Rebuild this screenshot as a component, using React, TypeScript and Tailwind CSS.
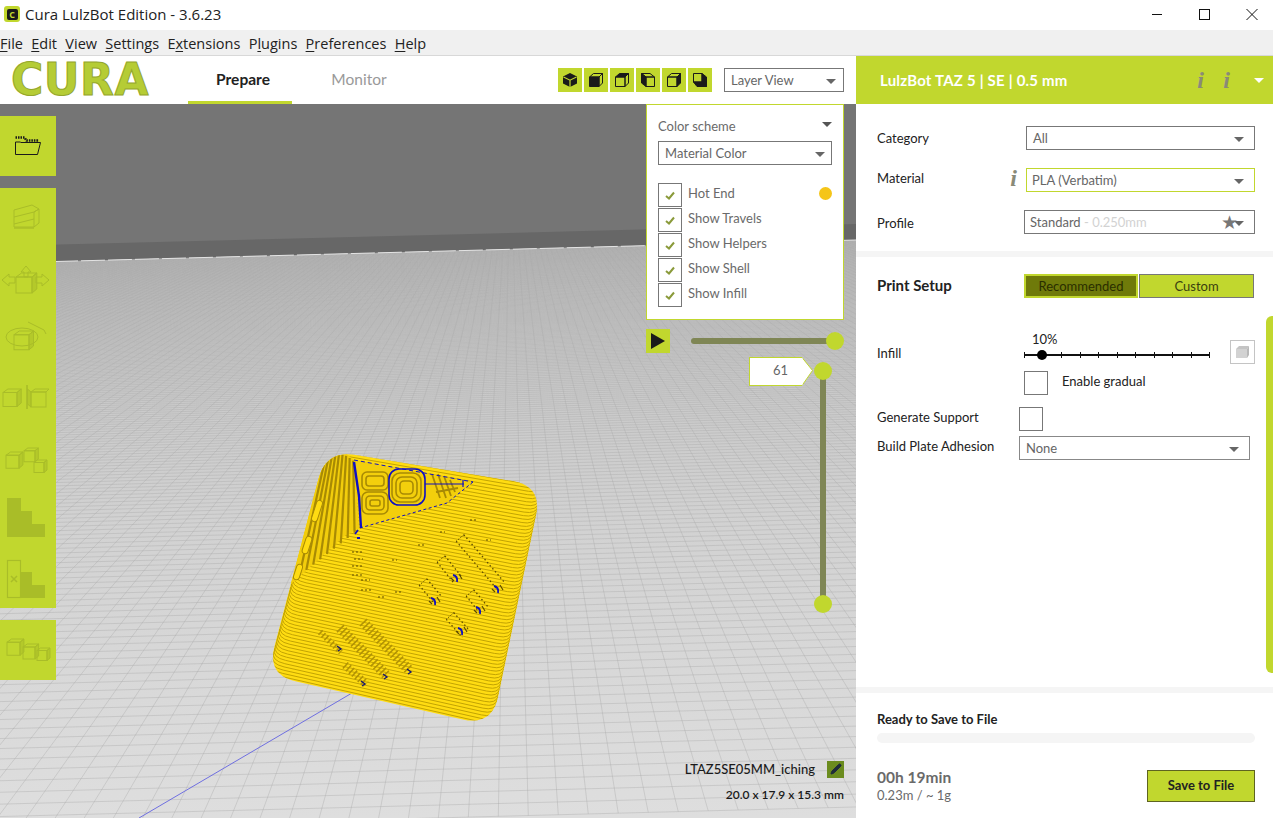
import { Pencil } from "lucide-react";

type Pt = [number, number];

const green = "bg-[#c1d72e]";

function roundedQuad(c: Pt[], r: number) {
  let d = "";
  c.forEach((p, i) => {
    const prev = c[(i + c.length - 1) % c.length];
    const next = c[(i + 1) % c.length];
    const la = Math.hypot(prev[0] - p[0], prev[1] - p[1]);
    const lb = Math.hypot(next[0] - p[0], next[1] - p[1]);
    const ra = Math.min(r, la / 2) / la;
    const rb = Math.min(r, lb / 2) / lb;
    const a = [p[0] + (prev[0] - p[0]) * ra, p[1] + (prev[1] - p[1]) * ra];
    const b = [p[0] + (next[0] - p[0]) * rb, p[1] + (next[1] - p[1]) * rb];
    d += `${i === 0 ? "M" : "L"}${a[0].toFixed(1)} ${a[1].toFixed(1)}Q${p[0]} ${p[1]} ${b[0].toFixed(1)} ${b[1].toFixed(1)}`;
  });
  return d + "Z";
}

const outer: Pt[] = [[326, 450], [542, 486], [492, 726], [267, 675]];

// printed layers: nearly parallel lines that hook up along both side walls
function layerLines() {
  let d = "";
  const n = 74;
  for (let i = 0; i <= n; i++) {
    const y0 = 455 + 3.5 * i;
    const s = 0.17 + 0.06 * (i / n);
    const at = (x: number) => y0 + s * (x - 400);
    let lx = 300;
    let rx = 520;
    for (let k = 0; k < 3; k++) {
      lx = 326 - 0.262 * (at(lx) - 450);
      rx = 542 - 0.21 * (at(rx) - 486);
    }
    const ly = at(lx);
    const ry = at(rx);
    d += `M${(lx + 3).toFixed(1)} ${(ly - 9).toFixed(1)}Q${lx.toFixed(1)} ${ly.toFixed(1)} ${(lx + 14).toFixed(1)} ${at(lx + 14).toFixed(1)}`;
    d += `L${(rx - 12).toFixed(1)} ${at(rx - 12).toFixed(1)}Q${rx.toFixed(1)} ${ry.toFixed(1)} ${(rx + 2).toFixed(1)} ${(ry - 8).toFixed(1)}`;
  }
  return d;
}

function floorGrid() {
  let d = "";
  const h = 130;
  const vx = 520;
  for (let i = 0; i < 280; i++) {
    const y = h + 688 / (1 + 0.019 * i);
    d += `M-60 ${y.toFixed(1)}H920`;
  }
  for (let i = -190; i < 190; i++) {
    const x0 = vx + i * 30;
    d += `M${vx + i * 30 * 0.14} ${h + 688 * 0.14}L${x0} 818`;
  }
  return d;
}

function fanStripes() {
  const lines = [];
  const n = 9;
  for (let i = 0; i < n; i++) {
    const t = (i + 0.5) / n;
    const x1 = 323 + (355 - 323) * t;
    const y1 = 462 - 8 * Math.sin(t * Math.PI);
    const x2 = 296 + (358 - 296) * t;
    const y2 = 578 + (530 - 578) * t;
    lines.push(<line key={i} x1={x1} y1={y1} x2={x2} y2={y2} stroke="#a88a04" strokeWidth={2.2} />);
  }
  return lines;
}

function Slot({ a, b, tip }: { a: Pt; b: Pt; tip: Pt }) {
  const len = Math.hypot(b[0] - a[0], b[1] - a[1]);
  const nx = ((b[1] - a[1]) / len) * 5;
  const ny = (-(b[0] - a[0]) / len) * 5;
  return (
    <g fill="none">
      <line x1={a[0] + nx} y1={a[1] + ny} x2={b[0] + nx} y2={b[1] + ny} stroke="#5d4b00" strokeWidth={1.3} strokeDasharray="1.5 2.5" />
      <line x1={a[0] - nx} y1={a[1] - ny} x2={b[0] - nx} y2={b[1] - ny} stroke="#5d4b00" strokeWidth={1.3} strokeDasharray="1.5 2.5" />
      <path d={`M${a[0] + nx} ${a[1] + ny}L${a[0] - nx} ${a[1] - ny}`} stroke="#5d4b00" strokeDasharray="1.5 1.5" />
      <path d={`M${tip[0] - 4} ${tip[1] - 5}q5 1 4 7`} stroke="#1010c0" strokeWidth={1.8} />
      <path d={`M${tip[0] + 2} ${tip[1] - 6}l3 5M${tip[0] - 6} ${tip[1] - 2}l3 3`} stroke="#5d4b00" strokeWidth={1.2} />
    </g>
  );
}

function Ribbon({ a, b, w, tip }: { a: Pt; b: Pt; w: number; tip: Pt }) {
  return (
    <g>
      <line x1={a[0]} y1={a[1]} x2={b[0]} y2={b[1]} stroke="#b29304" strokeWidth={w} strokeDasharray="1.6 2.4" />
      <path d={`M${tip[0] - 3} ${tip[1] - 3}l4 3l-3 2`} fill="none" stroke="#1a1a70" strokeWidth={1.4} />
    </g>
  );
}

// the 3D view: build plate, back wall and the sliced model
function Scene() {
  return (
    <svg className="absolute inset-0" width={856} height={714} viewBox="0 104 856 714">
      <defs>
        <linearGradient id="floor" x1="0" y1="240" x2="0" y2="818" gradientUnits="userSpaceOnUse">
          <stop offset="0" stopColor="#c0c0c0" />
          <stop offset="0.5" stopColor="#d2d2d2" />
          <stop offset="1" stopColor="#dedede" />
        </linearGradient>
        <clipPath id="floorClip">
          <polygon points="0,263 856,240 856,818 0,818" />
        </clipPath>
        <clipPath id="dieClip">
          <path d={roundedQuad(outer, 30)} />
        </clipPath>
      </defs>
      <rect x={0} y={104} width={856} height={714} fill="#757575" />
      <polygon points="0,246 856,224 856,242 0,264" fill="#676767" />
      <polygon points="0,263 856,240 856,818 0,818" fill="url(#floor)" />
      <g clipPath="url(#floorClip)">
        <path d={floorGrid()} transform="rotate(-1.5 430 500)" fill="none" stroke="#a8a8a8" strokeWidth={0.7} strokeOpacity={0.55} />
      </g>
      <line x1={0} y1={263} x2={856} y2={240} stroke="#e4e4e4" strokeWidth={1} strokeDasharray="24 3" />
      <line x1={139} y1={818} x2={352} y2={693} stroke="#6f6fe0" strokeWidth={1} />

      <path d={roundedQuad(outer, 30)} fill="#ffdc12" />
      <g clipPath="url(#dieClip)">
        <path d={layerLines()} fill="none" stroke="#c2a303" strokeWidth={1} />
        {/* left wall with coarse stripes */}
        <polygon points="318,462 342,450 355,461 359,528 343,537 290,585" fill="#f2cd0c" />
        {fanStripes()}
        <rect x={-3} y={-11} width={6} height={22} rx={3} transform="translate(317 511) rotate(18)" fill="#ffdc12" stroke="#a88a04" />
        <rect x={-3} y={-9} width={6} height={18} rx={3} transform="translate(307 545) rotate(18)" fill="#ffdc12" stroke="#a88a04" />
        <rect x={-3} y={-8} width={6} height={16} rx={3} transform="translate(298 572) rotate(18)" fill="#ffdc12" stroke="#a88a04" />
        {/* top recess */}
        <polygon points="354,460 473,482 447,503 360,528" fill="#f3cf0c" />
      </g>
      <g fill="none" stroke="#a88a04" strokeWidth={1.6}>
        <rect x={362} y={472} width={26} height={18} rx={5} />
        <rect x={366} y={476} width={18} height={10} rx={3} />
        <rect x={362} y={492} width={26} height={22} rx={6} />
        <rect x={366} y={496} width={18} height={14} rx={4} />
        <rect x={370} y={500} width={10} height={6} rx={2} />
        <rect x={392} y={473} width={29} height={29} rx={8} />
        <rect x={396} y={477} width={21} height={21} rx={6} />
        <rect x={400} y={481} width={13} height={13} rx={4} />
        <path d="M432 474l8 24M438 474l8 24M444 476l7 20M450 480l5 12M436 492l22-4" strokeWidth={1.8} />
      </g>
      <g fill="none" stroke="#0f0fc4">
        <path d="M354 462l5 34l2 32" strokeWidth={2.4} />
        <path d="M354 460L473 482" strokeWidth={1} strokeDasharray="4 3" />
        <path d="M473 482L447 503L360 528" strokeWidth={1} strokeDasharray="3 2.5" />
        <rect x={389} y={469} width={36} height={36} rx={10} strokeWidth={1.6} />
        <path d="M425 484H464M463 480v7" strokeWidth={1.2} />
        <path d="M358 530l-3 4M360 538h-3" strokeWidth={1.8} />
      </g>
      <path d="M352 552h10M354 559h9M352 566h11M352 575h12M361 580h9M361 590h10M378 597h6M395 592h6M392 560h5M418 545h6M440 532h5M470 520h6M486 540h5" stroke="#5d4b00" strokeWidth={1} strokeDasharray="2 2" />

      <Slot a={[460, 538]} b={[501, 586]} tip={[498, 591]} />
      <Slot a={[441, 559]} b={[457, 579]} tip={[457, 580]} />
      <Slot a={[423, 582]} b={[438, 600]} tip={[435, 603]} />
      <Slot a={[470, 593]} b={[484, 610]} tip={[480, 612]} />
      <Slot a={[450, 616]} b={[466, 634]} tip={[462, 633]} />
      <Ribbon a={[320, 632]} b={[341, 652]} w={6} tip={[340, 649]} />
      <Ribbon a={[340, 628]} b={[387, 676]} w={10} tip={[386, 677]} />
      <Ribbon a={[363, 622]} b={[410, 671]} w={10} tip={[410, 672]} />
      <Ribbon a={[345, 665]} b={[366, 684]} w={8} tip={[364, 684]} />
    </svg>
  );
}

function Caret({ className = "" }: { className?: string }) {
  return (
    <svg width="10" height="5" viewBox="0 0 10 5" className={className}>
      <polygon points="0,0 10,0 5,5" fill="currentColor" />
    </svg>
  );
}

function Cube({ top, front, side }: { top?: boolean; front?: boolean; side?: boolean }) {
  return (
    <svg width="16" height="16" viewBox="0 0 16 16" stroke="#1a1a1a" strokeWidth="1" strokeLinejoin="round">
      <polygon points="1.500,5 5.500,1.500 14.500,1.500 11,5" fill={top ? "#1a1a1a" : "none"} />
      <polygon points="1.500,5 11,5 11,14.500 1.500,14.500" fill={front ? "#1a1a1a" : "none"} />
      <polygon points="11,5 14.500,1.500 14.500,11 11,14.500" fill={side ? "#1a1a1a" : "none"} />
    </svg>
  );
}

function LeftCube() {
  return (
    <svg width="16" height="16" viewBox="0 0 16 16" stroke="#1a1a1a" strokeLinejoin="round">
      <polygon points="1.500,1.500 10,1.500 14.500,5 6,5" fill="none" />
      <polygon points="1.500,1.500 6,5 6,14.500 1.500,11" fill="#1a1a1a" />
      <rect x="6" y="5" width="8.500" height="9.500" fill="none" />
    </svg>
  );
}

function IsoCube() {
  return (
    <svg width="16" height="16" viewBox="0 0 16 16">
      <polygon points="8,1 15,4.500 15,11.500 8,15 1,11.500 1,4.500" fill="#1a1a1a" />
      <path d="M1.500 5L8 8.200L14.500 5M8 8.200V15" stroke="#c1d72e" strokeWidth="1.200" fill="none" />
    </svg>
  );
}

function BackCube() {
  return (
    <svg width="16" height="16" viewBox="0 0 16 16" stroke="#1a1a1a" strokeLinejoin="round">
      <polygon points="1.500,1.500 10,1.500 10,10 1.500,10" fill="none" />
      <polygon points="1.500,10 10,10 14.500,14.500 5,14.500" fill="#1a1a1a" />
      <polygon points="10,1.500 14.500,5 14.500,14.500 10,10" fill="#1a1a1a" />
    </svg>
  );
}

function Select({ value, extra, className, border = "border-[#777]" }: { value: string; extra?: string; className: string; border?: string }) {
  return (
    <div className={`h-6 flex items-center justify-between pt-[2px] border bg-white text-[13px] text-[#666] ${border} ${className}`}>
      <span>
        {value}
        {extra && <span className="text-[#d2d2d2]">{extra}</span>}
      </span>
      <Caret className="text-[#666]" />
    </div>
  );
}

function Check({ label, dot }: { label: string; dot?: boolean }) {
  return (
    <div className="flex items-center h-6">
      <div className="w-6 h-6 border border-[#777] flex items-center justify-center shrink-0">
        <svg width="10" height="9" viewBox="0 0 10 9">
          <path d="M1 5l3 2.500L9 1.500" fill="none" stroke="#8a9a3a" strokeWidth="2" />
        </svg>
      </div>
      <span className="ml-[6px] -mt-[2px] text-[13px] text-[#6a6a6a] flex-1">{label}</span>
      {dot && <span className="-mt-[4px] w-[13px] h-[13px] rounded-full bg-[#f5c518]" />}
    </div>
  );
}

function InfoI({ className = "" }: { className?: string }) {
  return <span className={`font-['Liberation_Serif',serif] italic font-bold text-[24px] leading-none text-[#8a8a78] ${className}`}>i</span>;
}

const toolStroke = "#a9bd28";

function ToolIcon({ children }: { children: React.ReactNode }) {
  return (
    <svg width="56" height="60" viewBox="0 0 56 60" fill="none" stroke={toolStroke} strokeWidth="1">
      {children}
    </svg>
  );
}

function MiniCube({ x, y, s = 14 }: { x: number; y: number; s?: number }) {
  return (
    <g>
      <polygon points={`${x},${y + s * 0.25} ${x + s * 0.35},${y} ${x + s * 1.3},${y} ${x + s},${y + s * 0.25}`} />
      <rect x={x} y={y + s * 0.25} width={s} height={s} />
      <polygon points={`${x + s},${y + s * 0.25} ${x + s * 1.3},${y} ${x + s * 1.3},${y + s} ${x + s},${y + s * 1.25}`} fill={toolStroke} fillOpacity="0.55" />
    </g>
  );
}

function LeftToolbar() {
  return (
    <div className="absolute left-0 top-3 w-14 flex flex-col gap-3">
      <div className={`${green} h-[60px] flex items-center justify-center`}>
        <svg width="28" height="20" viewBox="0 0 28 20" fill="none" stroke="#1a1a1a" strokeWidth="1">
          <path d="M1.500 1.500h9l2 3h12l-1 0" strokeWidth="2.400" strokeDasharray="1.500 1" />
          <path d="M1.500 6v12.500h22L26.500 6.500H6.500M1.500 6h5" />
        </svg>
      </div>
      <div className={`${green} h-[420px] flex flex-col`}>
        <ToolIcon>
          <path d="M14 22l18-5l7 4l-5 3v15H14zM14 29l20-5M14 36l20-5M34 24l5-3v14l-5 4" />
          <path d="M14 40h20" strokeWidth="2" strokeOpacity="0.7" />
        </ToolIcon>
        <ToolIcon>
          <MiniCube x={16} y={25} s={16} />
          <path d="M26 18l-5 6h3v5h4v-5h3zM2 32l7-6v3h6v6H9v3zM49 32l-7-6v3h-6v6h6v3z" />
        </ToolIcon>
        <ToolIcon>
          <ellipse cx="22" cy="29" rx="16" ry="9" />
          <MiniCube x={14} y={23} s={15} />
          <path d="M28 14l16 8l2 4" />
        </ToolIcon>
        <ToolIcon>
          <MiniCube x={3} y={21} s={14} />
          <path d="M27 17v24" strokeWidth="1.600" />
          <rect x={31} y={24} width={15} height={15} />
          <polygon points="31,24 35,21 49,21 46,24" />
          <polygon points="31,24 27.500,21 27.500,36 31,39" fill={toolStroke} fillOpacity="0.55" />
        </ToolIcon>
        <ToolIcon>
          <MiniCube x={6} y={24} s={13} />
          <MiniCube x={24} y={20} s={11} />
          <MiniCube x={34} y={32} s={10} />
        </ToolIcon>
        <ToolIcon>
          <polygon points="7,10 21,10 21,23 32,23 32,36 45,36 45,49 7,49" fill={toolStroke} stroke="none" />
        </ToolIcon>
        <ToolIcon>
          <rect x={7.500} y={12.500} width={13} height={37} strokeWidth="1.200" />
          <path d="M11 28l6 6M17 28l-6 6" strokeWidth="1.500" />
          <polygon points="21,24 32,24 32,37 45,37 45,50 21,50" fill={toolStroke} stroke="none" />
        </ToolIcon>
      </div>
      <div className={`${green} h-[60px] flex items-center justify-center`}>
        <svg width="50" height="30" viewBox="0 0 50 30" fill="none" stroke={toolStroke}>
          <MiniCube x={4} y={4} s={13} />
          <MiniCube x={20} y={9} s={12} />
          <MiniCube x={34} y={13} s={10} />
        </svg>
      </div>
    </div>
  );
}

function LayerPanel() {
  return (
    <div className="absolute right-3 top-0 w-[198px] font-['Lato',sans-serif]">
      <div className="h-[216px] bg-white border border-[#c1d72e] px-[11px] pt-[11px]">
        <div className="flex items-center justify-between h-5 text-[13px] text-[#6a6a6a]">
          <span className="pt-[2px]">Color scheme</span>
          <Caret className="text-[#555] -mt-1" />
        </div>
        <Select value="Material Color" className="mt-[5px] w-full pl-[6px] pr-[6px]" />
        <div className="mt-[18px] flex flex-col gap-px">
          <Check label="Hot End" dot />
          <Check label="Show Travels" />
          <Check label="Show Helpers" />
          <Check label="Show Shell" />
          <Check label="Show Infill" />
        </div>
      </div>
      <div className="mt-[9px] flex items-center">
        <div className={`${green} w-6 h-6 flex items-center justify-center`}>
          <svg width="14" height="16" viewBox="0 0 14 16">
            <polygon points="0,0 14,8 0,16" fill="#1a1a1a" />
          </svg>
        </div>
        <div className="relative ml-[21px] w-[144px] h-[6px] rounded-full bg-[#7f8655]">
          <span className={`absolute -right-[9px] -top-[6px] w-[18px] h-[18px] rounded-full ${green}`} />
        </div>
      </div>
    </div>
  );
}

function LayerSlider() {
  return (
    <div className="absolute left-[749px] top-[253px] flex items-start font-['Lato',sans-serif]">
      <div className="w-[52px] h-[29px] bg-white border border-[#c1d72e] border-r-0 flex items-center justify-center pl-[10px] pb-[2px] text-[13px] text-[#666]">61</div>
      <svg width="12" height="29" viewBox="0 0 12 29">
        <polygon points="0,0.500 1,0.500 11.500,13.500 1,28.500 0,28.500" fill="#fff" stroke="#c1d72e" />
        <rect x="0" y="1" width="1.500" height="27" fill="#fff" />
      </svg>
      <div className="relative ml-[7px] mt-[14px] w-[6px] h-[233px] bg-[#7f8655]">
        <span className={`absolute -left-[6px] -top-[9px] w-[18px] h-[18px] rounded-full ${green}`} />
        <span className={`absolute -left-[6px] -bottom-[9px] w-[18px] h-[18px] rounded-full ${green}`} />
      </div>
    </div>
  );
}

function Sidebar() {
  return (
    <aside className="relative w-[417px] shrink-0 bg-white flex flex-col font-['Lato',sans-serif] text-[13px] text-[#222]">
      <div className={`${green} h-12 shrink-0 flex items-center pl-6 text-white text-[15px] font-bold tracking-[0.2px]`}>
        <span className="flex-1">LulzBot TAZ 5 | SE | 0.5 mm</span>
        <InfoI className="mr-[19px]" />
        <InfoI className="mr-[24px]" />
        <Caret className="mr-[9px]" />
      </div>

      <div className="h-[147px] shrink-0 pl-[21px] pr-[18px] pt-[22px]">
        <div className="flex items-center h-6">
          <span className="flex-1 pt-[2px]">Category</span>
          <Select value="All" className="w-[229px] pl-[6px] pr-[10px]" />
        </div>
        <div className="flex items-center h-6 mt-[18px]">
          <span className="flex-1 -mt-[2px]">Material</span>
          <InfoI className="mr-[9px] -ml-2 -mt-[4px]" />
          <Select value="PLA (Verbatim)" className="w-[229px] pl-[5px] pr-[10px]" border="border-[#c1d72e]" />
        </div>
        <div className="flex items-center h-6 mt-[18px]">
          <span className="flex-1 mt-[4px]">Profile</span>
          <div className="relative">
            <Select value="Standard" extra=" - 0.250mm" className="w-[231px] pl-[5px] pr-[10px]" />
            <span className="absolute right-[17px] top-[1px] text-[19px] leading-[22px] text-[#777]">★</span>
          </div>
        </div>
      </div>

      <div className="h-[6px] shrink-0 bg-[#f5f5f5]" />

      <div className="flex-1 pl-[21px] pr-[18px] pt-[17px]">
        <div className="flex items-center h-6">
          <span className="flex-1 -mt-[2px] text-[15px] font-bold text-[#222]">Print Setup</span>
          <div className="flex w-[230px] h-6 gap-px mr-px">
            <div className="w-[114px] pt-[2px] border-2 border-[#c1d72e] bg-[#6f7a0a] flex items-center justify-center text-[#2a2e00]">Recommended</div>
            <div className={`flex-1 pt-[2px] border border-[#777] ${green} flex items-center justify-center text-[#3a3f10]`}>Custom</div>
          </div>
        </div>

        <div className="flex items-center mt-[42px] h-6">
          <span className="w-[147px] mt-[4px]">Infill</span>
          <div className="relative w-[186px] h-6">
            <span className="absolute left-[8px] -top-[10px] text-[13px]">10%</span>
            <div className="absolute left-0 right-0 top-[14px] h-[2px] bg-[#111]" />
            <div className="absolute left-0 right-0 top-[12px] flex justify-between">
              {[0, 1, 2, 3, 4, 5, 6, 7, 8, 9, 10].map((t) => (
                <span key={t} className="w-px h-[6px] bg-[#111]" />
              ))}
            </div>
            <span className="absolute left-[13px] top-[10px] w-[10px] h-[10px] rounded-full bg-black" />
          </div>
          <div className="ml-[20px] w-[25px] h-6 border border-[#c4c4c4] flex items-center justify-center">
            <svg width="15" height="14" viewBox="0 0 15 14">
              <polygon points="1,4 4,1 14,1 12,4" fill="#c4c4c4" />
              <polygon points="1,4 12,4 12,13 1,13" fill="#d2d2d2" />
              <polygon points="12,4 14,1 14,10 12,13" fill="#b8b8b8" />
            </svg>
          </div>
        </div>

        <div className="flex items-center mt-[7px] ml-[147px]">
          <div className="w-6 h-6 border border-[#777]" />
          <span className="ml-[14px] -mt-[2px]">Enable gradual</span>
        </div>

        <div className="flex items-center mt-3">
          <span className="w-[142px] -mt-[2px]">Generate Support</span>
          <div className="w-6 h-6 border border-[#777]" />
        </div>

        <div className="flex items-center mt-[5px]">
          <span className="w-[142px] -mt-[2px]">Build Plate Adhesion</span>
          <Select value="None" className="w-[231px] pl-[6px] pr-[10px]" border="border-[#888]" />
        </div>
      </div>

      <div className="h-[6px] shrink-0 bg-[#f5f5f5]" />

      <div className="h-[125px] shrink-0 pl-[21px] pr-[18px] pt-[18px]">
        <div className="text-[13px] font-bold text-[#222] leading-[16px]">Ready to Save to File</div>
        <div className="mt-[6px] h-[10px] rounded-full bg-[#f5f5f5]" />
        <div className="mt-[26px] flex items-center justify-between">
          <div className="text-[#6a6a6a]">
            <div className="text-[15.500px] font-bold leading-[17px]">00h 19min</div>
            <div className="text-[13px] leading-[17px] pt-px">0.23m / ~ 1g</div>
          </div>
          <button className={`w-[108px] h-8 -mt-[2px] border border-[#5e6420] ${green} text-[13px] font-bold text-[#222]`}>Save to File</button>
        </div>
      </div>

      <div className={`absolute right-0 top-[260px] h-[357px] w-[7px] rounded-l-[6px] ${green}`} />
    </aside>
  );
}

const menu: [string, string, string][] = [
  ["", "F", "ile"],
  ["", "E", "dit"],
  ["", "V", "iew"],
  ["", "S", "ettings"],
  ["E", "x", "tensions"],
  ["P", "l", "ugins"],
  ["", "P", "references"],
  ["", "H", "elp"],
];

export default function App() {
  return (
    <div className="w-[1273px] h-[818px] overflow-hidden flex flex-col bg-white">
      {/* Title bar */}
      <div className="h-[30px] shrink-0 flex items-center pb-[2px] font-['Open_Sans',sans-serif] text-[15px] text-[#222]">
        <div className="ml-[4px] w-4 h-4 rounded-[3px] bg-[#c1d72e] flex items-center justify-center">
          <span className="w-[11px] h-[11px] rounded-[2px] bg-[#1a1a1a] flex items-center justify-center text-[9px] leading-none font-bold text-[#c1d72e]">C</span>
        </div>
        <span className="ml-[5px] flex-1">Cura LulzBot Edition - 3.6.23</span>
        <svg width="121" height="12" viewBox="0 0 121 12" fill="none" stroke="#111">
          <path d="M0 6.500h10" />
          <rect x="47.500" y="1.500" width="10" height="10" />
          <path d="M94.500 1l11 11M105.500 1l-11 11" />
        </svg>
      </div>

      {/* Menu bar */}
      <div className="h-[26px] shrink-0 bg-[#f0f0f0] flex items-center gap-[8.300px] pt-[2px] font-['Open_Sans',sans-serif] text-[14.500px] text-[#222] border-b border-[#d8d8d8]">
        {menu.map(([a, u, b]) => (
          <span key={a + u + b}>
            {a}
            <span className="underline underline-offset-2">{u}</span>
            {b}
          </span>
        ))}
      </div>

      <div className="flex-1 flex min-h-0">
        <div className="w-[856px] flex flex-col">
          {/* Top bar */}
          <div className="h-12 shrink-0 flex items-center font-['Lato',sans-serif] bg-white">
            <div className="w-[188px] pl-[11px] font-['DejaVu_Sans',sans-serif] font-bold text-[44px] leading-none text-[#b5cc35] [-webkit-text-stroke:1px_#93a62c] tracking-[0.5px]">CURA</div>
            <div className="w-[104px] h-full flex items-center justify-center pt-[3px] pl-[6px] border-b-[3px] border-[#c1d72e] text-[15.500px] font-bold text-[#222]">Prepare</div>
            <div className="w-[134px] text-center text-[15.500px] text-[#999]">Monitor</div>
            <div className="ml-[132px] flex gap-[2px]">
              {[<IsoCube />, <Cube front />, <Cube top />, <LeftCube />, <Cube side />, <BackCube />].map((icon, i) => (
                <div key={i} className={`w-6 h-6 ${green} flex items-center justify-center`}>
                  {icon}
                </div>
              ))}
            </div>
            <Select value="Layer View" className="ml-3 w-[120px] pl-[6px] pr-[7px]" />
          </div>

          {/* Viewport */}
          <div className="flex-1 relative overflow-hidden">
            <Scene />
            <LeftToolbar />
            <LayerPanel />
            <LayerSlider />
            <div className="absolute right-3 bottom-[15px] flex flex-col items-end gap-2 font-['Lato',sans-serif] text-[#1a1a1a]">
              <div className="flex items-center gap-3 text-[13px] font-medium">
                <span>LTAZ5SE05MM_iching</span>
                <span className="w-[17px] h-[17px] bg-[#6b8c1e] flex items-center justify-center">
                  <Pencil className="w-3 h-3 text-[#1f2c3a]" fill="#1f2c3a" />
                </span>
              </div>
              <span className="text-[12px] leading-4 font-semibold">20.0 x 17.9 x 15.3 mm</span>
            </div>
          </div>
        </div>
        <Sidebar />
      </div>
    </div>
  );
}
